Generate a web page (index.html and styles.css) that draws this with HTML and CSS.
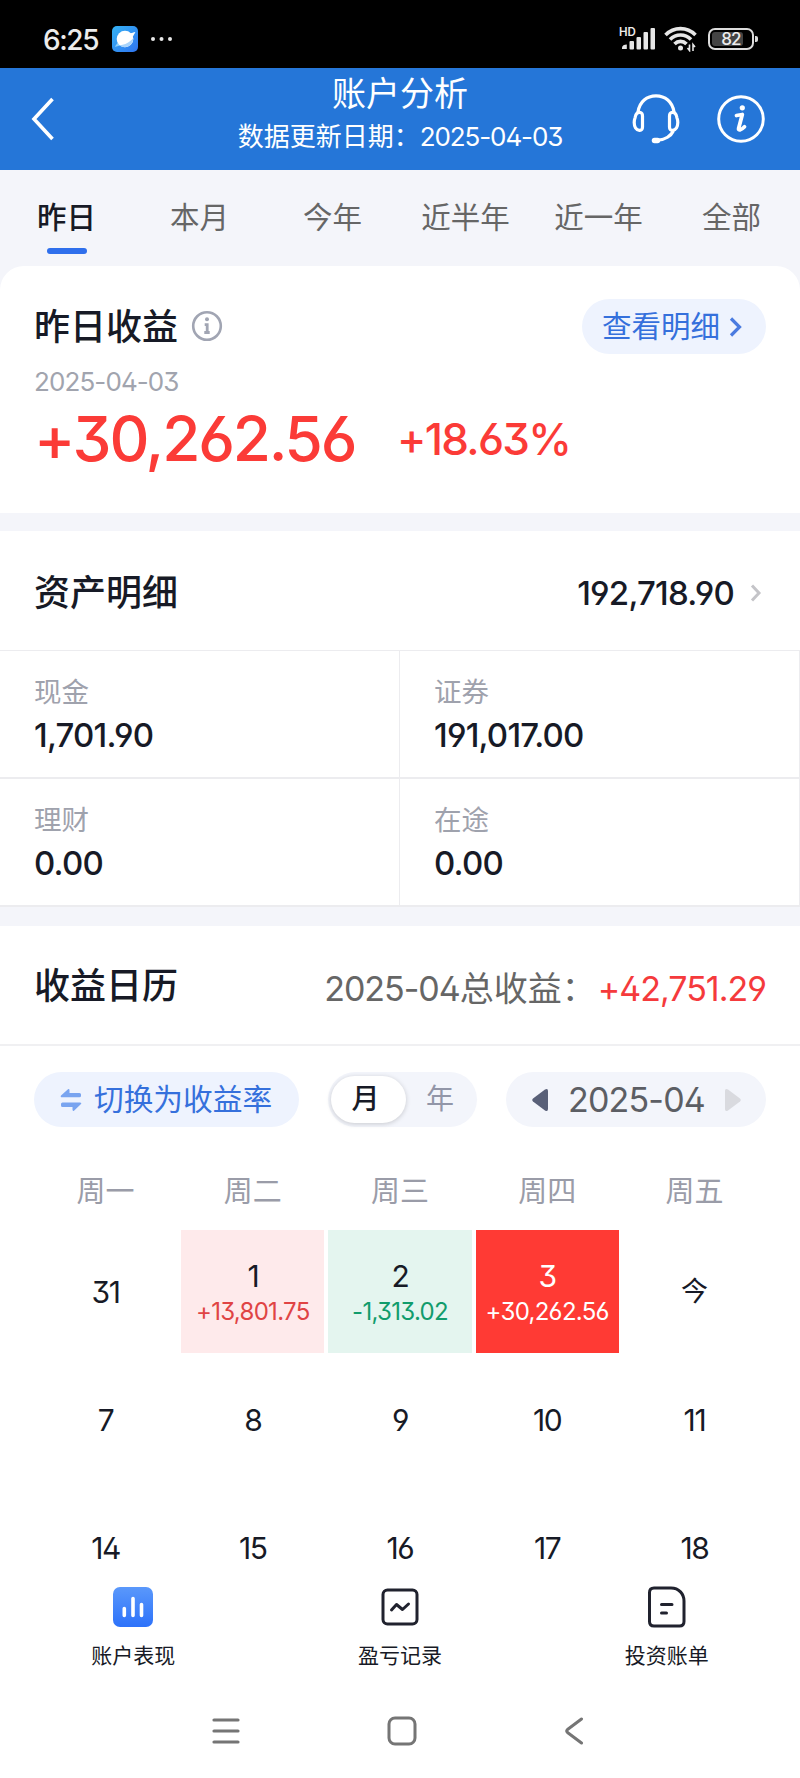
FILE: index.html
```
<!DOCTYPE html>
<html lang="zh-CN">
<head>
    <meta charset="UTF-8">
    <meta name="viewport" content="width=device-width, initial-scale=1.0">
    <title>账户分析</title>
    <link rel="stylesheet" href="styles.css">
</head>
<body>
    <div class="status-bar">
        <span class="time">6:25</span>
        <svg class="app-icon" width="26" height="26" viewBox="0 0 26 26">
            <defs>
                <linearGradient id="appBg" x1="0" y1="0" x2="1" y2="1">
                    <stop offset="0" stop-color="#35b3f5"/>
                    <stop offset="1" stop-color="#2f74f0"/>
                </linearGradient>
            </defs>
            <rect width="26" height="26" rx="5" fill="url(#appBg)"/>
            <path d="M17.500 8L23.300 6C22.500 10 12 20 2.800 20.800L6.500 15.500Z" fill="#8fd0fb"/>
            <circle cx="13" cy="13" r="8.300" fill="#fff"/>
            <path d="M21.300 12C18 16 13 19 7.500 19.300C12 23.500 21.500 20.500 21.300 12Z" fill="#a9d4fb"/>
            <path d="M18 7.500L23.300 6L20.500 11Z" fill="#fff"/>
        </svg>
        <svg class="dots" width="24" height="6" viewBox="0 0 24 6" fill="#e8e8e8">
            <circle cx="3" cy="3" r="2"/><circle cx="11.500" cy="3" r="2"/><circle cx="20" cy="3" r="2"/>
        </svg>
        <div class="status-right">
            <div class="signal">
                <span class="hd">HD</span>
                <svg width="36" height="24" viewBox="0 0 36 24" fill="#e6e6e6">
                    <path d="M2 22V20.500Q2.500 17.500 6.800 17.500V22Z"/>
                    <rect x="9.500" y="14" width="4.500" height="8.500" rx="1"/>
                    <rect x="16.500" y="10" width="4.500" height="12.500" rx="1"/>
                    <rect x="23.500" y="5" width="4.500" height="17.500" rx="1"/>
                    <rect x="30.500" y="1" width="4.500" height="21.500" rx="1"/>
                </svg>
            </div>
            <svg class="wifi" width="34" height="26" viewBox="0 0 34 26" fill="none" stroke="#e6e6e6" stroke-width="3.600">
                <path d="M1.500 9C10 0.500 23 0.500 31.500 9"/>
                <path d="M6 13.500C12 7.500 21 7.500 27 13.500"/>
                <path d="M10.500 18C14 14.500 19 14.500 22.500 18"/>
                <circle cx="16.500" cy="22" r="2.500" fill="#e6e6e6" stroke="none"/>
                <path d="M25.500 18.500V24.500L23.500 22M29 25V18.500L31 21" stroke-width="1.600"/>
            </svg>
            <div class="battery"><span>82</span></div>
        </div>
    </div>

    <header class="header">
        <svg class="back" width="24" height="44" viewBox="0 0 24 44" fill="none" stroke="#fff" stroke-width="3.600">
            <path d="M21.500 2L3 22L21.500 42"/>
        </svg>
        <div class="header-title">
            <h1>账户分析</h1>
            <p>数据更新日期：<span class="num">2025-04-03</span></p>
        </div>
        <div class="header-icons">
            <svg width="48" height="50" viewBox="0 0 48 50" fill="none" stroke="#fff" stroke-width="3.200" stroke-linecap="round">
                <path d="M6 18C7.500 7.500 15 1.800 24 1.800S40.500 7.500 42 18"/>
                <path d="M3 24C3.500 19.500 6 17.800 8.500 18.500C10.300 19 10.500 20.500 10.500 22V33C10.500 35 9.500 36.500 7.500 36.300C4 36 2.200 32.500 2.200 28.500Q2.200 26 3 24Z"/>
                <path d="M45 24C44.500 19.500 42 17.800 39.500 18.500C37.700 19 37.500 20.500 37.500 22V33C37.500 35 38.500 36.500 40.500 36.300C44 36 45.800 32.500 45.800 28.500Q45.800 26 45 24Z"/>
                <path d="M41 37.500C39 42 33 45.500 27 46"/>
                <path d="M22.500 46.500H25.500" stroke-width="5.500"/>
            </svg>
            <svg width="48" height="48" viewBox="0 0 48 48" fill="none" stroke="#fff" stroke-width="3">
                <circle cx="24" cy="24" r="22.300"/>
                <circle cx="25.300" cy="12.800" r="2.600" fill="#fff" stroke="none"/>
                <path d="M19.500 20.500L25.300 19.500L21.600 33.500C21.200 35.500 24 35.500 27.500 31.800" stroke-width="3.800" stroke-linejoin="round" stroke-linecap="round"/>
            </svg>
        </div>
    </header>

    <nav class="tabs">
        <a class="tab active">昨日</a>
        <a class="tab">本月</a>
        <a class="tab">今年</a>
        <a class="tab">近半年</a>
        <a class="tab">近一年</a>
        <a class="tab">全部</a>
    </nav>

    <section class="card profit">
        <div class="profit-head">
            <h2>昨日收益</h2>
            <svg width="32" height="32" viewBox="0 0 32 32" fill="none" stroke="#a1a5b3" stroke-width="2.600">
                <circle cx="16" cy="16" r="13.800"/>
                <circle cx="16" cy="9.300" r="2" fill="#a1a5b3" stroke="none"/>
                <path d="M13.700 14.700H16.200V22.500M13.300 22.500H18.700" stroke-width="2.800"/>
            </svg>
            <a class="detail-btn"><span>查看明细</span>
                <svg width="14" height="20" viewBox="0 0 14 20" fill="none" stroke="#4a7be0" stroke-width="3.200">
                    <path d="M2 1.500L10.500 10L2 18.500"/>
                </svg>
            </a>
        </div>
        <p class="profit-date num">2025-04-03</p>
        <div class="profit-values num">
            <span class="amount">+30,262.56</span>
            <span class="rate">+18.63%</span>
        </div>
    </section>

    <section class="card assets">
        <div class="section-head">
            <h2>资产明细</h2>
            <span class="total num">192,718.90</span>
            <svg width="12" height="20" viewBox="0 0 12 20" fill="none" stroke="#c4c4c8" stroke-width="3">
                <path d="M2 2.500L9 10L2 17.500"/>
            </svg>
        </div>
        <div class="asset-grid">
            <div class="asset"><label>现金</label><span class="num">1,701.90</span></div>
            <div class="asset"><label>证券</label><span class="num">191,017.00</span></div>
            <div class="asset"><label>理财</label><span class="num">0.00</span></div>
            <div class="asset"><label>在途</label><span class="num">0.00</span></div>
        </div>
    </section>

    <section class="card calendar">
        <div class="section-head">
            <h2>收益日历</h2>
            <p class="month-total"><span class="num">2025-04</span>总收益：<span class="num red">+42,751.29</span></p>
        </div>
        <div class="controls">
            <a class="switch-btn">
                <svg width="22" height="24" viewBox="0 0 22 24" fill="#79a4f0">
                    <path d="M1 7.500L8 1.200Q9.500 0.500 9.500 2.500V5H19.500Q21 5 21 6.500V7.800Q21 9.300 19.500 9.300H2Q0 9.300 1 7.500Z"/>
                    <path d="M21 16L14 22.800Q12.500 23.500 12.500 21.500V19H2.500Q1 19 1 17.500V16Q1 14.500 2.500 14.500H20Q22 14.500 21 16Z"/>
                </svg>
                <span>切换为收益率</span>
            </a>
            <div class="toggle">
                <span class="on">月</span>
                <span>年</span>
            </div>
            <div class="month-picker">
                <svg width="17" height="24" viewBox="0 0 17 24"><path d="M1 10.500L13 1.500Q16 0 16 3V21Q16 24 13 22.500L1 13.500Q-0.500 12 1 10.500Z" fill="#596078"/></svg>
                <span class="num">2025-04</span>
                <svg width="17" height="24" viewBox="0 0 17 24"><path d="M16 10.500L4 1.500Q1 0 1 3V21Q1 24 4 22.500L16 13.500Q17.500 12 16 10.500Z" fill="#d9dadf"/></svg>
            </div>
        </div>
        <div class="weekdays">
            <span>周一</span><span>周二</span><span>周三</span><span>周四</span><span>周五</span>
        </div>
        <div class="days num">
            <div class="day">31</div>
            <div class="day up">1<small>+13,801.75</small></div>
            <div class="day down">2<small>-1,313.02</small></div>
            <div class="day selected">3<small>+30,262.56</small></div>
            <div class="day today">今</div>
            <div class="day">7</div>
            <div class="day">8</div>
            <div class="day">9</div>
            <div class="day">10</div>
            <div class="day">11</div>
            <div class="day">14</div>
            <div class="day">15</div>
            <div class="day">16</div>
            <div class="day">17</div>
            <div class="day">18</div>
        </div>
    </section>

    <footer class="tabbar">
        <a>
            <svg width="42" height="42" viewBox="0 0 42 42">
                <defs>
                    <linearGradient id="barBg" x1="0" y1="0" x2="0" y2="1">
                        <stop offset="0" stop-color="#5a98fb"/>
                        <stop offset="1" stop-color="#2d72fa"/>
                    </linearGradient>
                </defs>
                <rect x="1" y="1" width="40" height="40" rx="7" fill="url(#barBg)"/>
                <path d="M12.300 22.500V29.500M21 12.500V29.500M29.500 18.500V29.500" stroke="#fff" stroke-width="3.600" stroke-linecap="round"/>
            </svg>
            账户表现
        </a>
        <a>
            <svg width="42" height="42" viewBox="0 0 42 42" fill="none" stroke="#20222e" stroke-width="3" stroke-linecap="round" stroke-linejoin="round">
                <rect x="4" y="4" width="34" height="34" rx="4.500"/>
                <path d="M12.500 24L17.500 18.500L23.500 23.500L29.500 18"/>
            </svg>
            盈亏记录
        </a>
        <a>
            <svg width="42" height="42" viewBox="0 0 42 42" fill="none" stroke="#20222e" stroke-width="3" stroke-linecap="round">
                <path d="M8 2H25C33 2 38 8 38 15V35.500Q38 40 33.500 40H8Q3.500 40 3.500 35.500V6.500Q3.500 2 8 2Z"/>
                <path d="M15.500 18.500H26M15.500 27H20.500"/>
            </svg>
            投资账单
        </a>
    </footer>

    <div class="sys-nav">
        <svg width="28" height="28" viewBox="0 0 28 28" stroke="#757575" stroke-width="3.200" stroke-linecap="round">
            <path d="M2 3H26M2 14H26M2 25H26"/>
        </svg>
        <svg width="30" height="30" viewBox="0 0 30 30" fill="none" stroke="#757575" stroke-width="3">
            <rect x="2" y="2" width="26" height="26" rx="6"/>
        </svg>
        <svg width="20" height="30" viewBox="0 0 20 30" fill="none" stroke="#757575" stroke-width="3" stroke-linecap="round" stroke-linejoin="round">
            <path d="M17.500 3L3.500 13.500Q2 15 3.500 16.500L17.500 27"/>
        </svg>
    </div>
</body>
</html>
```
FILE: styles.css
```
* {
    box-sizing: border-box;
    margin: 0;
    padding: 0;
}
body {
    width: 800px;
    height: 1778px;
    overflow: hidden;
    display: flex;
    flex-direction: column;
    font-family: Inter, "Noto Sans CJK SC", sans-serif;
    background-color: #f4f5fa;
    color: #171a26;
}
svg {
    flex: none;
    display: block;
}
h1, h2 {
    font-weight: 500;
}
.num {
    font-feature-settings: "ss01", "cv09";
}
.status-bar {
    height: 68px;
    background-color: #000;
    color: #ececec;
    display: flex;
    align-items: center;
    padding: 10px 42px 0 43px;
}
.time {
    width: 69px;
    font-size: 28px;
    font-weight: 450;
    letter-spacing: -1.4px;
    padding-top: 2px;
}
.dots {
    margin-left: 12px;
}
.status-right {
    margin-left: auto;
    display: flex;
    align-items: center;
}
.signal {
    position: relative;
}
.hd {
    position: absolute;
    left: -1px;
    top: -1px;
    font-size: 11.5px;
    line-height: 12px;
    font-weight: 600;
}
.wifi {
    margin: 0 10px 0 8px;
}
.battery {
    position: relative;
    width: 46px;
    height: 22px;
    margin-right: 4px;
    border: 2px solid #dcdcdc;
    border-radius: 7px;
    padding: 2px;
    font-size: 17px;
    line-height: 14px;
    font-weight: 500;
    letter-spacing: -0.8px;
    text-align: center;
}
.battery span {
    display: block;
    width: 31px;
    height: 14px;
    padding-left: 7px;
    border-radius: 3px;
    background-color: #444;
}
.battery::after {
    content: "";
    position: absolute;
    right: -6px;
    top: 6px;
    width: 3px;
    height: 6px;
    border-radius: 0 2px 2px 0;
    background-color: #dcdcdc;
}
.header {
    height: 102px;
    background-color: #2576d8;
    color: #fff;
    display: grid;
    grid-template-columns: 200px 1fr 200px;
    align-items: center;
}
.back {
    margin-left: 31px;
}
.header-title {
    align-self: start;
    padding-top: 1px;
    text-align: center;
    white-space: nowrap;
}
.header-title h1 {
    font-size: 34px;
    line-height: 50px;
    font-weight: 400;
}
.header-title p {
    font-size: 26px;
    line-height: 36px;
}
.header-title .num {
    letter-spacing: -1.1px;
}
.header-icons {
    display: flex;
    align-items: center;
    justify-content: flex-end;
    gap: 37px;
    padding-right: 35px;
}
.tabs {
    height: 96px;
    padding-right: 2px;
    display: grid;
    grid-template-columns: repeat(6, 1fr);
    font-size: 29.5px;
    line-height: 95px;
    text-align: center;
    color: #666;
}
.tab {
    position: relative;
}
.tab.active {
    font-weight: 500;
    color: #171a26;
}
.tab.active::after {
    content: "";
    position: absolute;
    left: 50%;
    top: 78px;
    width: 40px;
    height: 6px;
    margin-left: -20px;
    border-radius: 3px;
    background-color: #2f6fec;
}
.card {
    background-color: #fff;
}
.profit {
    height: 247px;
    margin-bottom: 18px;
    padding: 33px 34px 0;
    border-radius: 24px 24px 0 0;
}
.profit-head {
    height: 55px;
    display: flex;
    align-items: center;
}
h2 {
    font-size: 36px;
    line-height: 52px;
}
.profit-head > svg {
    margin: 0 0 2px 13px;
}
.detail-btn {
    height: 55px;
    margin-left: auto;
    padding: 0 23px 0 20px;
    border-radius: 28px;
    background-color: #eef3fe;
    color: #3570dc;
    font-size: 29.5px;
    display: flex;
    align-items: center;
    gap: 9px;
}
.detail-btn span, .switch-btn span {
    line-height: 40px;
    padding-bottom: 2px;
}
.profit-date {
    margin-top: 10px;
    font-size: 26px;
    line-height: 36px;
    letter-spacing: -0.9px;
    color: #a1a4ae;
}
.profit-values {
    display: flex;
    align-items: center;
    color: #fb3b37;
    line-height: 78px;
    font-weight: 450;
}
.amount {
    width: 363px;
    font-size: 62px;
    letter-spacing: -2.2px;
}
.rate {
    font-size: 44px;
    letter-spacing: -1.7px;
}
.section-head {
    height: 119px;
    padding: 4px 34px 0;
    display: flex;
    align-items: center;
    justify-content: space-between;
}
.assets {
    margin-bottom: 19px;
}
.total {
    margin-left: auto;
    margin-right: 16px;
    font-size: 33px;
    font-weight: 450;
    letter-spacing: -0.8px;
}
.assets .section-head {
    padding-right: 38px;
}
.asset-grid {
    display: grid;
    grid-template-columns: 1fr 1fr;
    border-top: 1px solid #ececef;
}
.asset {
    height: 128px;
    padding: 21px 34px 0;
    border-right: 1px solid #ececef;
    border-bottom: 2px solid #ececef;
    display: flex;
    flex-direction: column;
}
.asset label {
    font-size: 27.5px;
    line-height: 40px;
    color: #9fa2ad;
}
.asset span {
    font-size: 33px;
    line-height: 47px;
    font-weight: 450;
    letter-spacing: -0.8px;
}
.calendar {
    flex: 1;
}
.calendar .section-head {
    height: 120px;
    padding-top: 2px;
    border-bottom: 2px solid #f0f0f2;
}
.month-total {
    font-size: 34px;
    color: #666;
    white-space: nowrap;
}
.month-total .num {
    letter-spacing: -1px;
}
.month-total .red {
    color: #f53a3c;
    margin-left: 2px;
}
.controls {
    margin-top: 26px;
    padding: 0 34px;
    display: flex;
    justify-content: space-between;
}
.switch-btn {
    width: 265px;
    height: 55px;
    padding-left: 26px;
    border-radius: 28px;
    background-color: #eef3fe;
    color: #3570dc;
    font-size: 29.7px;
    display: flex;
    align-items: center;
    gap: 12px;
}
.toggle {
    width: 149px;
    height: 55px;
    padding: 4px 3px;
    border-radius: 28px;
    background-color: #f3f5fb;
    display: grid;
    grid-template-columns: 1fr 68px;
    font-size: 28px;
    line-height: 46px;
    text-align: center;
    color: #9296a8;
}
.toggle .on {
    border-radius: 24px;
    background-color: #fff;
    box-shadow: 0 1px 5px rgba(0, 0, 0, 0.18);
    color: #171a26;
    font-weight: 500;
    padding-right: 6px;
}
.month-picker {
    width: 260px;
    height: 55px;
    padding: 0 25px 0 26px;
    border-radius: 28px;
    background-color: #f3f5fb;
    color: #5c5e64;
    font-size: 34px;
    letter-spacing: -0.8px;
    display: flex;
    align-items: center;
    justify-content: space-between;
}
.weekdays, .days {
    margin: 0 34px;
    display: grid;
    grid-template-columns: repeat(5, 1fr);
    gap: 5px 4px;
    text-align: center;
}
.weekdays {
    margin-top: 45px;
    font-size: 29px;
    line-height: 40px;
    color: #9a9ca8;
}
.days {
    margin-top: 18px;
    grid-auto-rows: 123px;
}
.day {
    display: flex;
    flex-direction: column;
    align-items: center;
    justify-content: center;
    font-size: 30px;
    line-height: 36px;
    letter-spacing: -1.4px;
}
.up, .down, .selected {
    padding-top: 5px;
}
.day small {
    font-size: 24px;
    line-height: 36px;
    letter-spacing: -0.7px;
}
.today {
    font-size: 27px;
    letter-spacing: 0;
}
.up {
    background-color: #feeaeb;
}
.up small {
    color: #e04444;
}
.down {
    background-color: #e4f5ef;
}
.down small {
    color: #119c6c;
}
.selected {
    background-color: #ff3a34;
    color: #fff;
}
/* the tab bar covers the rest of the calendar */
.tabbar {
    position: absolute;
    left: 0;
    top: 1570px;
    width: 800px;
    height: 116px;
    padding-top: 16px;
    background-color: #fff;
    display: grid;
    grid-template-columns: repeat(3, 1fr);
}
.tabbar a {
    display: flex;
    flex-direction: column;
    align-items: center;
    gap: 13px;
    font-size: 21px;
    line-height: 30px;
}
.sys-nav {
    position: absolute;
    left: 0;
    top: 1686px;
    width: 800px;
    height: 92px;
    padding: 0 216px 2px 212px;
    background-color: #fff;
    display: grid;
    grid-template-columns: 28px 1fr 20px;
    align-items: center;
    justify-items: center;
}
```
